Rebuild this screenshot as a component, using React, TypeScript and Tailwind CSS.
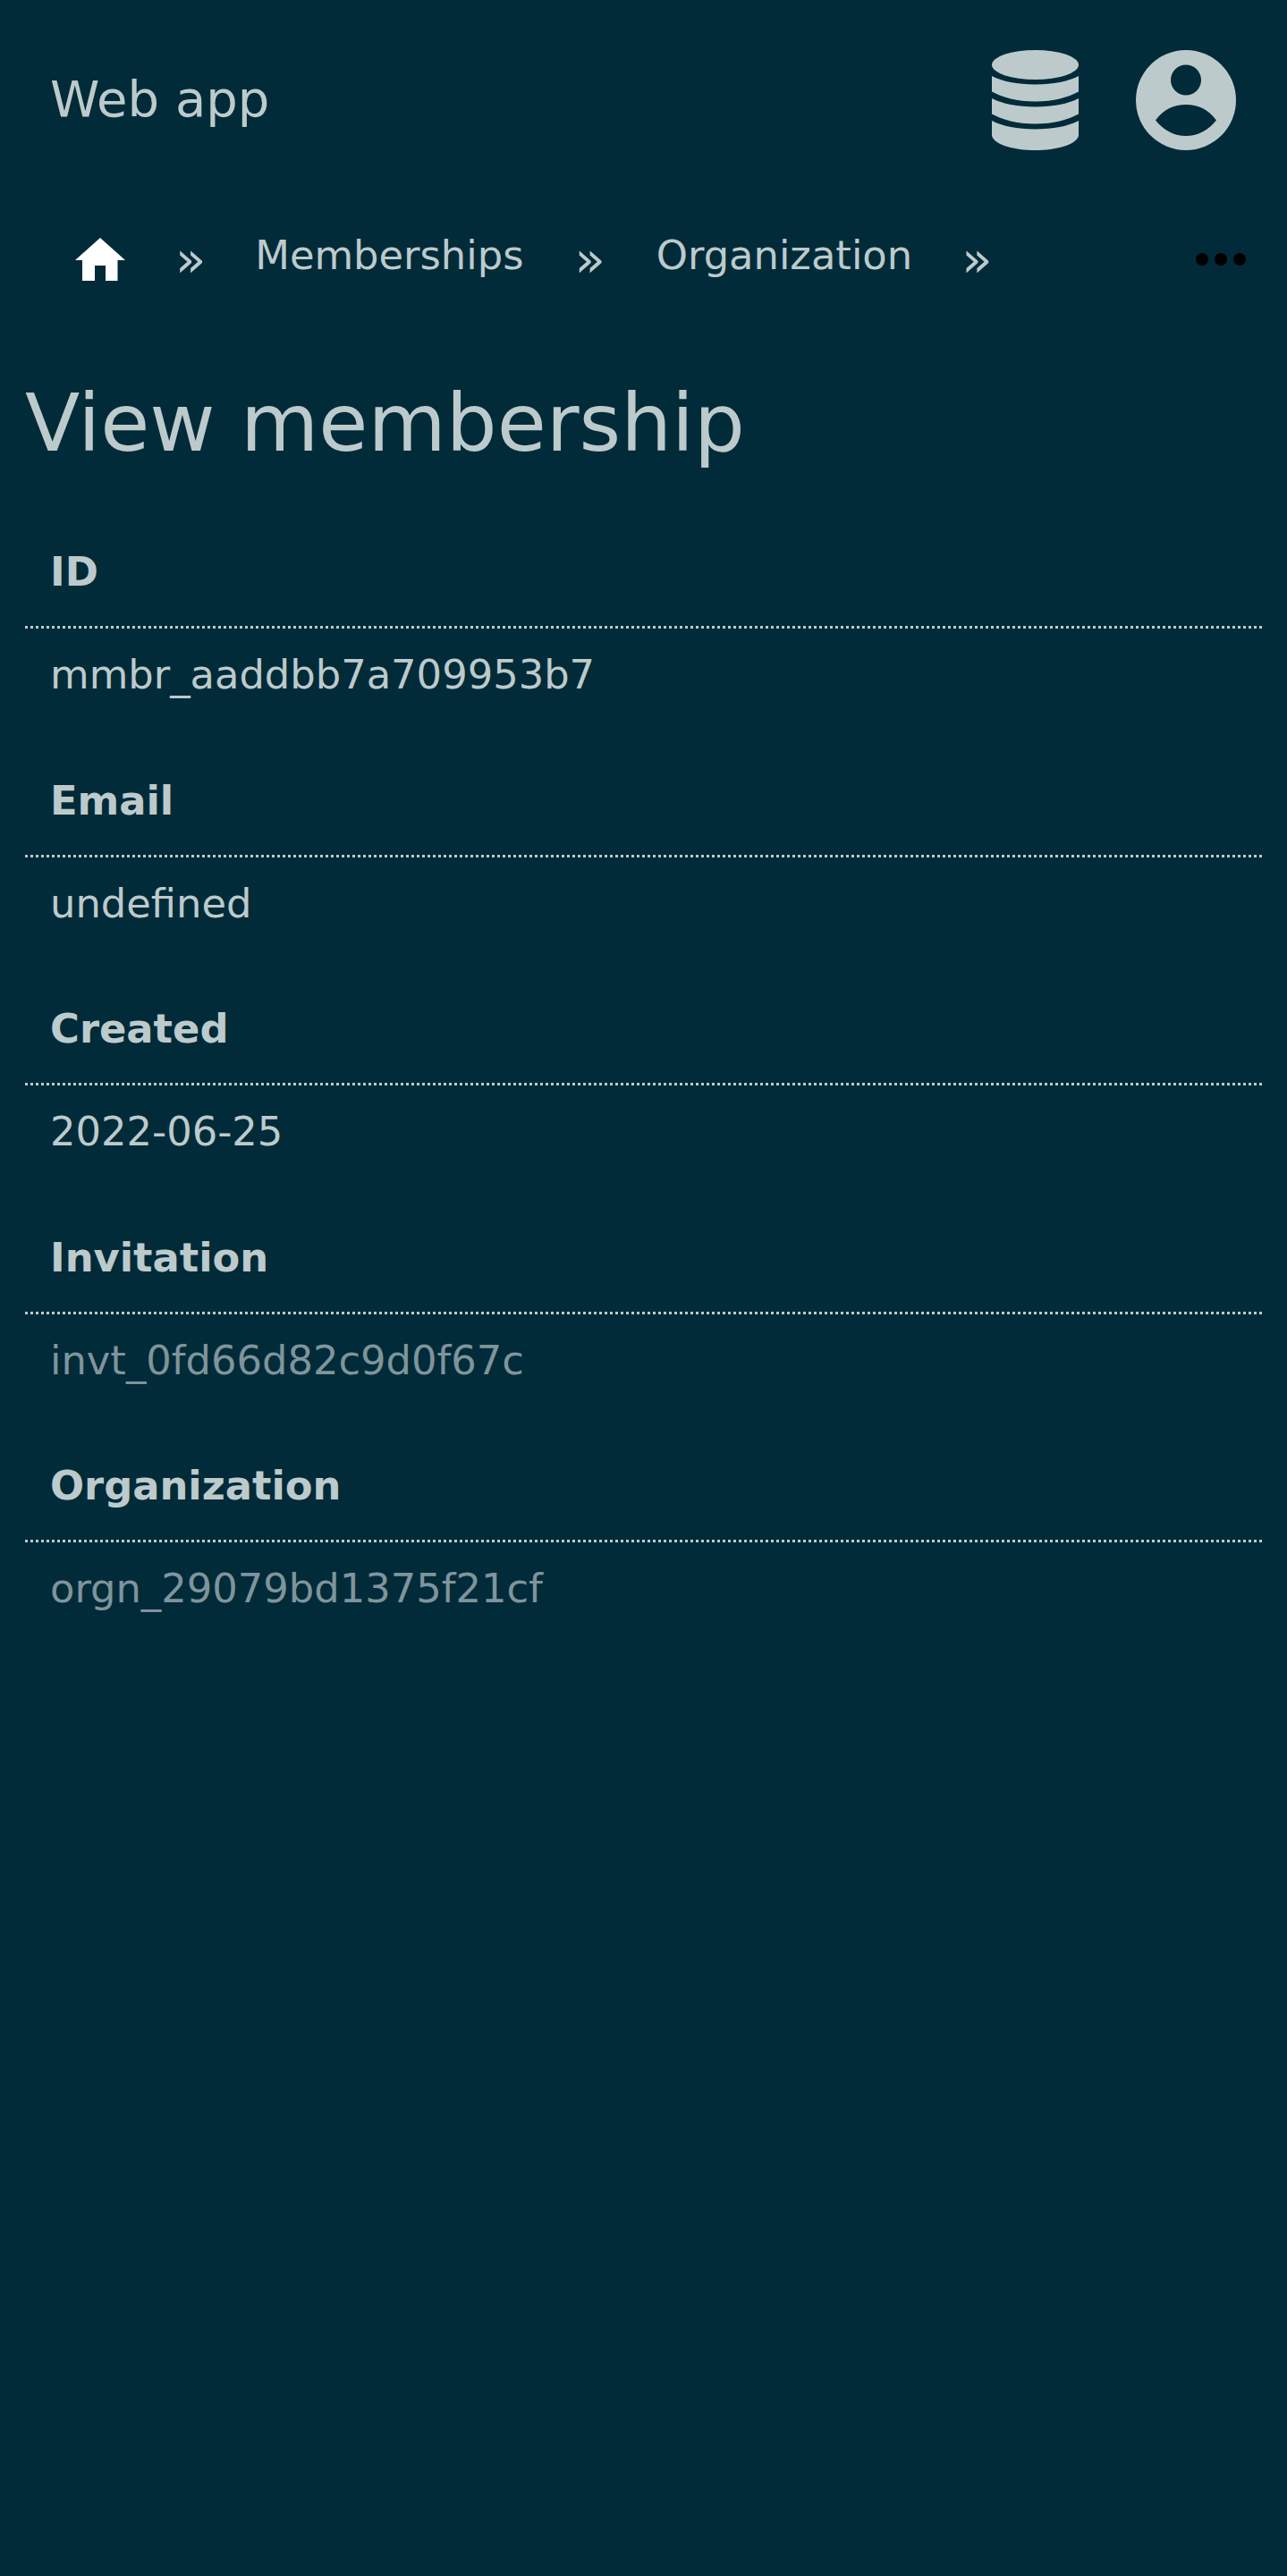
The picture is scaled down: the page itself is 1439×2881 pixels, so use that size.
const rows = [
  { label: "ID", value: "mmbr_aaddbb7a709953b7", link: false },
  { label: "Email", value: "undefined", link: false },
  { label: "Created", value: "2022-06-25", link: false },
  { label: "Invitation", value: "invt_0fd66d82c9d0f67c", link: true },
  { label: "Organization", value: "orgn_29079bd1375f21cf", link: true },
];

function Db() {
  return (
    <svg viewBox="0 0 97 112" className="w-[97px] h-[112px] fill-[#bdcacc]">
      <ellipse cx="48.5" cy="16.500" rx="48.5" ry="16.500" />
      <path d="M0 29C12 35 28 38.500 48.500 38.500S85 35 97 29V46.500C85 53 69 57.500 48.500 57.500S12 53 0 46.500z" />
      <path d="M0 54C12 60 28 63.500 48.500 63.500S85 60 97 54V71.500C85 78 69 82.500 48.500 82.500S12 78 0 71.500z" />
      <path d="M0 79C12 85 28 88.500 48.500 88.500S85 85 97 79V96C94 106 72 112 48.500 112S3 106 0 96z" />
    </svg>
  );
}

function User() {
  return (
    <svg viewBox="0 0 112 112" className="w-[112px] h-[112px] fill-[#bdcacc]">
      <path
        fillRule="evenodd"
        d="M56 0a56 56 0 1 1 0 112A56 56 0 1 1 56 0zM56 16.500a17 17 0 1 0 0 34a17 17 0 1 0 0-34zM22 78.500C31 66 43 61 56 61s25 5 34 17.500C81 90 69 96 56 96S31 90 22 78.500z"
      />
    </svg>
  );
}

function Home() {
  return (
    <svg viewBox="0 0 56 48" className="w-[56px] h-[48px] fill-white">
      <path d="M28 0 56 25H47.500V48H34V31H22V48H8V25H0z" />
    </svg>
  );
}

function Sep() {
  return <span className="block text-[56px] leading-none">»</span>;
}

export default function App() {
  return (
    <div className="min-h-[2881px] bg-[#012b38] text-[#bdcacc] font-['DejaVu_Sans',sans-serif]">
      <header className="flex items-center justify-between pl-[56px] pr-[57px] pt-[56px]">
        <div className="text-[56px] leading-[112px] -mt-[2px]">Web app</div>
        <div className="flex items-center gap-[64px]">
          <Db />
          <User />
        </div>
      </header>
      <nav className="flex items-center mt-[78px] pl-[84px] pr-[46px] h-[88px]">
        <Home />
        <div className="ml-[56px]"><Sep /></div>
        <a className="ml-[55px] mb-[9px] text-[44.8px]">Memberships</a>
        <div className="ml-[57px]"><Sep /></div>
        <a className="ml-[57px] mb-[9px] text-[44.8px]">Organization</a>
        <div className="ml-[55px]"><Sep /></div>
        <div className="ml-auto flex gap-[7px]">
          <span className="w-[14px] h-[14px] rounded-full bg-black" />
          <span className="w-[14px] h-[14px] rounded-full bg-black" />
          <span className="w-[14px] h-[14px] rounded-full bg-black" />
        </div>
      </nav>
      <main className="px-[28px]">
        <h1 className="text-[89.6px] leading-[110px] mt-[84px] mb-[84px]">View membership</h1>
        {rows.map((r) => (
          <section key={r.label} className="h-[255.500px]">
            <div className="border-b-[3px] border-dotted border-[#bdcacc] px-[28px] h-[91px] font-bold text-[44.8px] leading-[56px]">
              {r.label}
            </div>
            <div className={"px-[28px] pt-[24px] text-[44.8px] leading-[56px] " + (r.link ? "text-[#7f949c]" : "")}>
              {r.value}
            </div>
          </section>
        ))}
      </main>
    </div>
  );
}
